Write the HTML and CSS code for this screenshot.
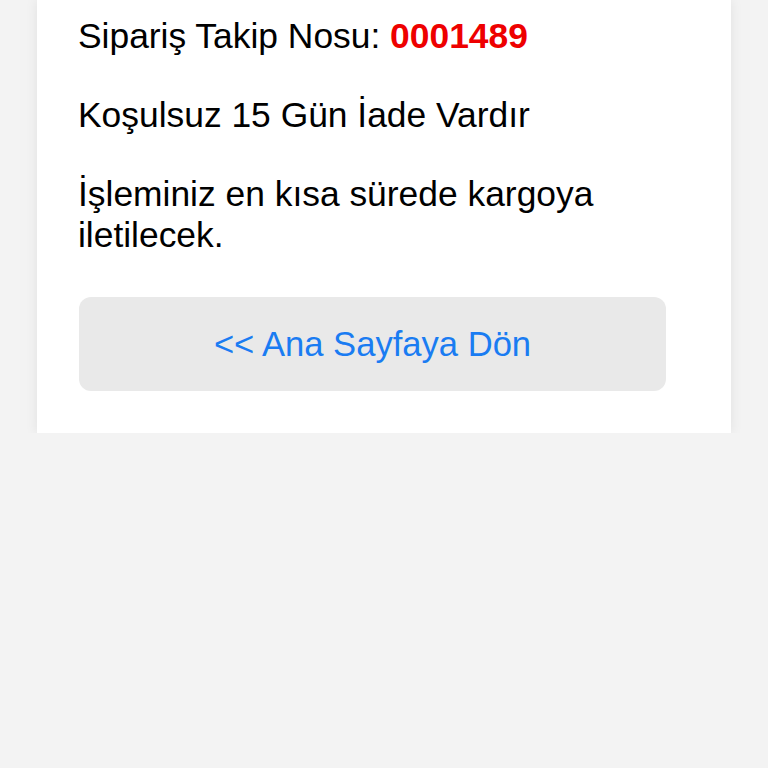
FILE: index.html
```html
<!DOCTYPE html>
<html lang="tr">
<head>
    <meta charset="UTF-8">
    <meta name="viewport" content="width=device-width, initial-scale=1.0">
    <title>Sipariş Alındı</title>
    <link rel="stylesheet" href="styles.css">
</head>
<body>
    <div class="container">
        <p>Sipariş Takip Nosu: <strong class="order-no">0001489</strong></p>
        <p>Koşulsuz 15 Gün İade Vardır</p>
        <p>İşleminiz en kısa sürede kargoya iletilecek.</p>
        <button class="home-btn" type="button">&lt;&lt; Ana Sayfaya Dön</button>
    </div>
</body>
</html>
```

FILE: styles.css
```css
body {
    margin: 0;
    background-color: #f3f3f3;
    font-family: "Liberation Sans", Arial, sans-serif;
    color: #000;
}
.container {
    width: 612px;
    margin-left: 37px;
    padding: 16px 41px 42px;
    background-color: white;
    box-shadow: 0px 0px 12px rgba(0, 0, 0, 0.08);
    display: flex;
    flex-direction: column;
    gap: 38px;
}
.container p {
    margin: 0;
    font-size: 35.4px;
    line-height: 41px;
}
.order-no {
    color: #ee0000;
}
.home-btn {
    width: 587px;
    height: 94px;
    margin-top: 3px;
    margin-left: 1px;
    background-color: #e9e9e9;
    border: none;
    border-radius: 12px;
    color: #1a7cf2;
    font-family: "Liberation Sans", Arial, sans-serif;
    font-size: 34.6px;
    cursor: pointer;
}
```
